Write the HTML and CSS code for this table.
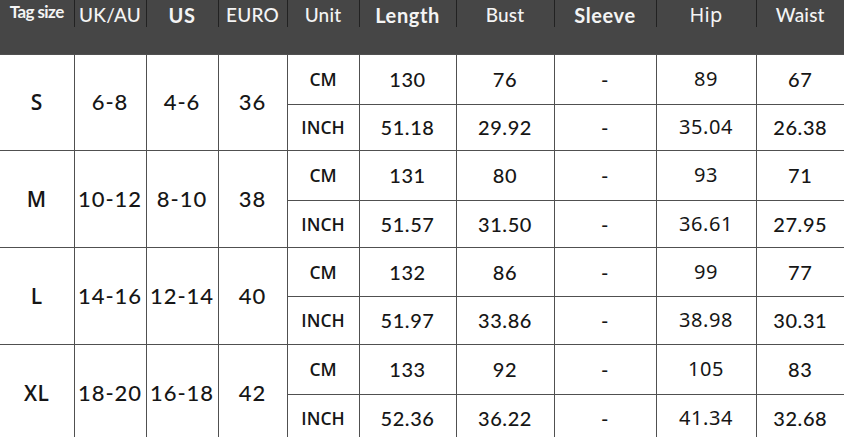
FILE: index.html
```html
<!DOCTYPE html>
<html lang="en">
<head>
<meta charset="utf-8">
<title>Size chart</title>
<link rel="stylesheet" href="styles.css">
</head>
<body>
<table class="chart">
  <colgroup>
    <col class="c-tag"><col class="c-uk"><col class="c-us"><col class="c-euro"><col class="c-unit">
    <col class="c-length"><col class="c-bust"><col class="c-sleeve"><col class="c-hip"><col class="c-waist">
  </colgroup>
  <thead>
    <tr class="head">
      <th class="h-tag">Tag size</th>
      <th>UK/AU</th>
      <th class="h-bold">US</th>
      <th>EURO</th>
      <th>Unit</th>
      <th class="h-bold">Length</th>
      <th>Bust</th>
      <th class="h-bold">Sleeve</th>
      <th class="h-light">Hip</th>
      <th>Waist</th>
    </tr>
    <tr class="head-pad"><td colspan="10"></td></tr>
  </thead>
  <tbody>
    <tr class="r-cm r1">
      <td rowspan="2" class="size">S</td><td rowspan="2" class="intl">6-8</td><td rowspan="2" class="intl">4-6</td><td rowspan="2" class="intl">36</td>
      <td class="unit">CM</td><td>130</td><td>76</td><td>-</td><td class="hip">89</td><td>67</td>
    </tr>
    <tr class="r-in r2">
      <td class="unit">INCH</td><td>51.18</td><td>29.92</td><td>-</td><td class="hip">35.04</td><td>26.38</td>
    </tr>
    <tr class="r-cm r3">
      <td rowspan="2" class="size">M</td><td rowspan="2" class="intl">10-12</td><td rowspan="2" class="intl">8-10</td><td rowspan="2" class="intl">38</td>
      <td class="unit">CM</td><td>131</td><td>80</td><td>-</td><td class="hip">93</td><td>71</td>
    </tr>
    <tr class="r-in r4">
      <td class="unit">INCH</td><td>51.57</td><td>31.50</td><td>-</td><td class="hip">36.61</td><td>27.95</td>
    </tr>
    <tr class="r-cm r5">
      <td rowspan="2" class="size">L</td><td rowspan="2" class="intl">14-16</td><td rowspan="2" class="intl">12-14</td><td rowspan="2" class="intl">40</td>
      <td class="unit">CM</td><td>132</td><td>86</td><td>-</td><td class="hip">99</td><td>77</td>
    </tr>
    <tr class="r-in r6">
      <td class="unit">INCH</td><td>51.97</td><td>33.86</td><td>-</td><td class="hip">38.98</td><td>30.31</td>
    </tr>
    <tr class="r-cm r7">
      <td rowspan="2" class="size">XL</td><td rowspan="2" class="intl">18-20</td><td rowspan="2" class="intl">16-18</td><td rowspan="2" class="intl">42</td>
      <td class="unit">CM</td><td>133</td><td>92</td><td>-</td><td class="hip">105</td><td>83</td>
    </tr>
    <tr class="r-in r8">
      <td class="unit">INCH</td><td>52.36</td><td>36.22</td><td>-</td><td class="hip">41.34</td><td>32.68</td>
    </tr>
  </tbody>
</table>
</body>
</html>
```
FILE: styles.css
```css
html, body {
  margin: 0;
  padding: 0;
  background: #ffffff;
}

body {
  width: 844px;
  height: 437px;
  overflow: hidden;
  font-family: Lato, "Open Sans", "Liberation Sans", sans-serif;
  color: #161616;
}

.chart {
  width: 844px;
  table-layout: fixed;
  border-collapse: collapse;
  border-spacing: 0;
}

.c-tag { width: 74px; }
.c-uk { width: 72px; }
.c-us { width: 72px; }
.c-euro { width: 69px; }
.c-unit { width: 72px; }
.c-length { width: 97px; }
.c-bust { width: 98px; }
.c-sleeve { width: 102px; }
.c-hip { width: 100px; }
.c-waist { width: 88px; }

.head {
  height: 27px;
}

.head th {
  padding: 4px 0 0;
  background: #464646;
  color: #f4f4f4;
  font-size: 19px;
  font-weight: 500;
  letter-spacing: 0.2px;
  text-align: center;
  vertical-align: top;
  border-left: 1px solid #222;
  line-height: 22px;
  white-space: nowrap;
}

.head th:first-child {
  border-left: none;
}

.head .h-tag {
  font-size: 17px;
  font-weight: 700;
  letter-spacing: -0.6px;
  padding-top: 1px;
  line-height: 22px;
}

.head .h-bold {
  font-size: 20px;
  font-weight: 700;
  letter-spacing: 0.6px;
}

.head .h-light {
  font-family: "Noto Sans", "Open Sans", sans-serif;
  font-weight: 400;
  font-size: 20px;
}

.head-pad {
  height: 27px;
}

.head-pad td {
  padding: 0;
  background: #464646;
  border: none;
}

tbody td {
  padding: 0;
  text-align: center;
  vertical-align: middle;
  border: 1px solid #505050;
  font-size: 20px;
  font-weight: 500;
  letter-spacing: 0.6px;
  line-height: 24px;
}

tbody tr td:first-child {
  border-left: none;
}

tbody tr td:last-child {
  border-right: none;
}

.size {
  font-family: "Open Sans", Lato, sans-serif;
  font-size: 21px;
  font-weight: 600;
  letter-spacing: 0.5px;
}

.intl {
  font-size: 22px;
  font-weight: 500;
  letter-spacing: 1px;
}

.unit {
  font-family: "Open Sans", Lato, sans-serif;
  font-size: 17.5px;
  font-weight: 600;
  letter-spacing: 0;
}

.hip {
  font-family: "Noto Sans", "Open Sans", sans-serif;
  font-weight: 400;
  font-size: 20px;
  letter-spacing: 0.6px;
}

.r1 { height: 50px; }
.r2 { height: 46px; }
.r3 { height: 50px; }
.r4 { height: 47px; }
.r5 { height: 49px; }
.r6 { height: 48px; }
.r7 { height: 50px; }
.r8 { height: 47px; }
```
